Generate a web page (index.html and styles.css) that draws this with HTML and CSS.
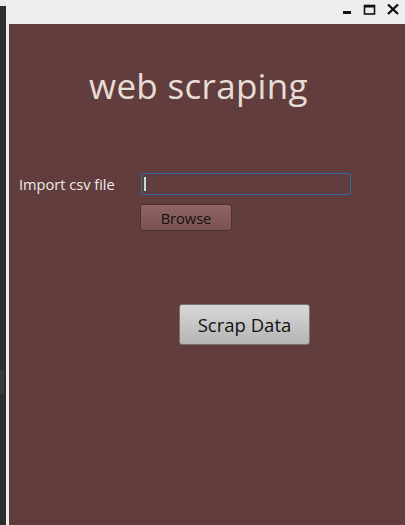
FILE: index.html
```html
<!DOCTYPE html>
<html>
<head>
<meta charset="utf-8">
<link rel="stylesheet" href="styles.css">
</head>
<body>
<div class="screen">
  <div class="desk">
    <div class="desk-top"></div>
    <div class="desk-mark"></div>
  </div>
  <div class="window">
    <div class="titlebar">
      <svg class="ctrl" width="70" height="20" viewBox="0 0 70 20">
        <rect x="9" y="11" width="8" height="3" fill="#111"/>
        <rect x="30.5" y="5.5" width="10" height="8.5" fill="none" stroke="#111" stroke-width="1.6"/>
        <rect x="30" y="5" width="11" height="2.5" fill="#111"/>
        <path d="M54 4.5 L64 14 M64 4.5 L54 14" stroke="#111" stroke-width="2.4"/>
      </svg>
    </div>
    <div class="frame">
      <main class="content">
        <h1 class="title">web scraping</h1>
        <div class="form">
          <label class="label">Import csv file</label>
          <div class="field-col">
            <div class="field"><span class="caret"></span></div>
            <button class="browse">Browse</button>
          </div>
        </div>
        <button class="scrap">Scrap Data</button>
      </main>
    </div>
  </div>
</div>
</body>
</html>
```

FILE: styles.css
```css
html, body {
  margin: 0;
  padding: 0;
  width: 405px;
  height: 525px;
  overflow: hidden;
  font-family: "Open Sans", "DejaVu Sans", sans-serif;
}
.screen {
  display: flex;
  width: 405px;
  height: 525px;
}
.desk {
  width: 6px;
  background: #2c2e2c;
  display: flex;
  flex-direction: column;
}
.desk-top {
  height: 6px;
  background: #e9e9e9;
}
.desk-mark {
  margin-top: 364px;
  height: 24px;
  width: 4px;
  background: #383a3c;
}
.window {
  flex: 1;
  display: flex;
  flex-direction: column;
  background: #eeeeee;
}
.titlebar {
  height: 24px;
  display: flex;
  justify-content: flex-end;
  align-items: flex-start;
}
.ctrl {
  width: 70px;
  height: 20px;
  margin-right: 1px;
}
.frame {
  flex: 1;
  padding-left: 3px;
  display: flex;
}
.content {
  flex: 1;
  background: #623d3d;
  display: flex;
  flex-direction: column;
}
.title {
  margin: 38px 0 0 80px;
  font-weight: 400;
  font-size: 35px;
  line-height: 48px;
  color: #e7ddd7;
  letter-spacing: 0.3px;
}
.form {
  display: flex;
  margin-top: 63px;
  margin-left: 10px;
}
.label {
  width: 122px;
  font-size: 14.6px;
  color: #f0eaea;
  padding-top: 2px;
  line-height: 19px;
}
.field-col {
  display: flex;
  flex-direction: column;
  gap: 9px;
}
.field {
  width: 206px;
  height: 20px;
  border: 1px solid #2f6d9a;
  border-radius: 2px;
  display: flex;
  align-items: center;
  padding-left: 2px;
}
.caret {
  width: 1.5px;
  height: 14px;
  background: #c8d8dc;
}
.browse {
  width: 92px;
  height: 27px;
  margin-left: -1px;
  border: 1px solid #4e2e2e;
  border-radius: 3px;
  background: linear-gradient(#916565, #7b5151);
  font-family: "Open Sans", "DejaVu Sans", sans-serif;
  font-size: 14.6px;
  color: #111;
  padding: 0;
}
.scrap {
  margin: 73px 0 0 170px;
  width: 131px;
  height: 41px;
  border: 1px solid #7a7070;
  border-radius: 3px;
  background: linear-gradient(#d8d8d8, #b4b4b4);
  font-family: "Open Sans", "DejaVu Sans", sans-serif;
  font-size: 18.5px;
  color: #111;
  padding: 0;
}
```
